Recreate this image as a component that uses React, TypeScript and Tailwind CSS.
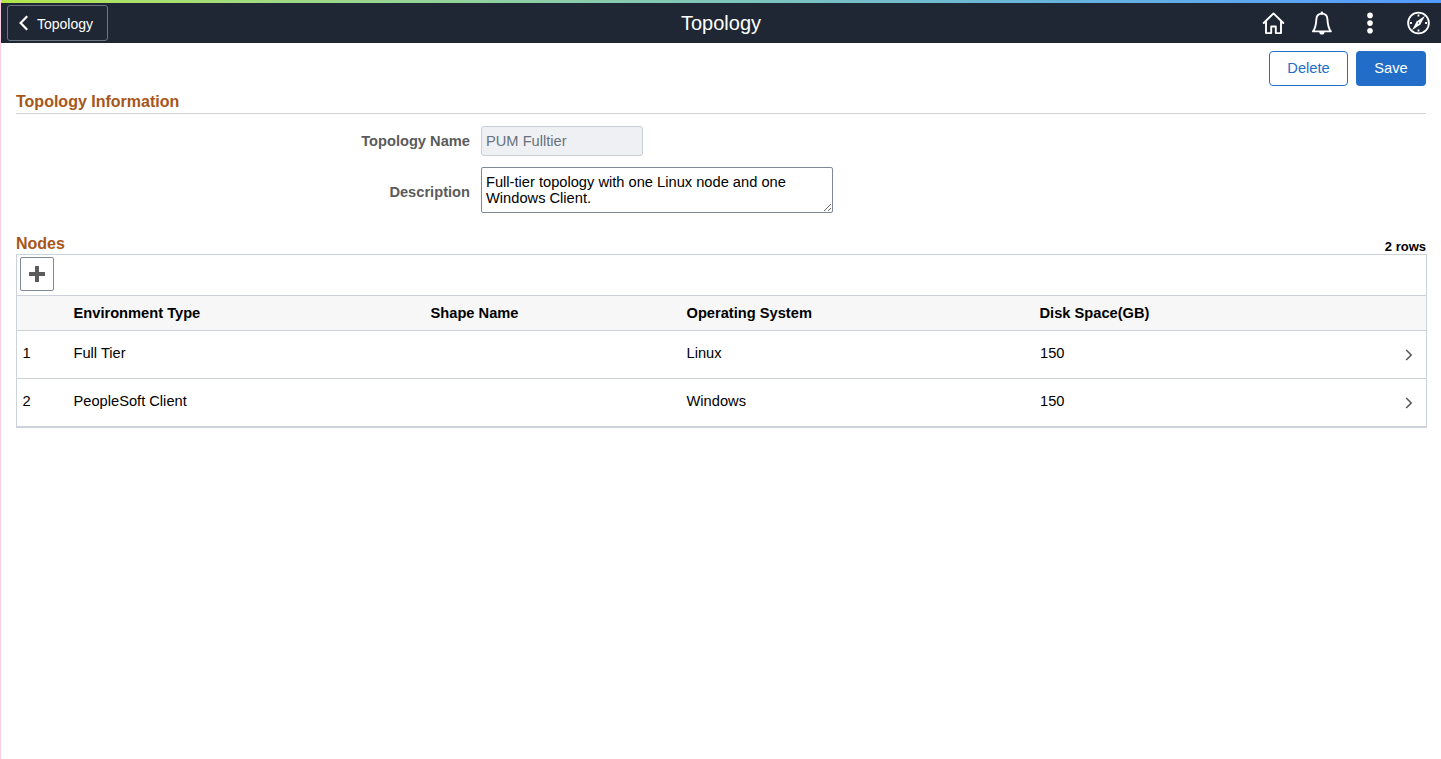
const nodes = [
  { id: 1, env: "Full Tier", shape: "", os: "Linux", disk: 150 },
  { id: 2, env: "PeopleSoft Client", shape: "", os: "Windows", disk: 150 },
];

const columns = "grid grid-cols-[56.5px_357px_256px_353px_1fr]";

function HomeIcon() {
  return (
    <svg width="24" height="24" viewBox="0 0 24 24" fill="none" stroke="#fff" strokeWidth="1.9" strokeLinejoin="round" strokeLinecap="round">
      <path d="M1.7 12 11.5 2.4l9.8 9.6M4 10.6v11.5h5.2v-6.6h4.6v6.6H19V10.6" />
    </svg>
  );
}

function BellIcon() {
  return (
    <svg width="24" height="24" viewBox="0 0 24 24" fill="none" stroke="#fff" strokeWidth="1.9" strokeLinejoin="round">
      <path d="M11.9 2.6c-3.4 0-5.3 2.3-5.5 5.4-.3 5.6-.7 8.8-3.4 12.4h17.8c-2.7-3.6-3.1-6.8-3.4-12.4-.2-3.1-2.1-5.4-5.5-5.4Z" />
      <path d="M9.3 21a2.6 2.6 0 0 0 5.2 0Z" fill="#fff" stroke="none" />
      <path d="M11.9 1.8v.6" strokeWidth="2.6" strokeLinecap="round" />
    </svg>
  );
}

function DotsIcon() {
  return (
    <svg width="24" height="24" viewBox="0 0 24 24" fill="#fff">
      <circle cx="12" cy="4.4" r="2.8" />
      <circle cx="12" cy="12.1" r="2.8" />
      <circle cx="12" cy="19.8" r="2.8" />
    </svg>
  );
}

function CompassIcon() {
  return (
    <svg width="24" height="24" viewBox="0 0 24 24" fill="none" stroke="#fff" strokeWidth="1.8">
      <circle cx="12.5" cy="12" r="10.4" />
      <path d="M12.5 3.4v2M12.5 18.6v2M3.9 12h2M19.1 12h2" />
      <path d="M19 4.8 14.4 13.6 6 19.2l4.6-8.8Z" fill="#fff" stroke="none" />
      <circle cx="12.5" cy="12" r="0.7" fill="#1e2733" stroke="none" />
    </svg>
  );
}

export default function App() {
  return (
    <div className="h-[759px] w-[1441px] overflow-hidden border-l border-[#ffd0e4] bg-white font-['Liberation_Sans',Arial,sans-serif] text-[14.667px] text-black">
      <div className="h-[3px] bg-linear-to-r from-[#b4e64b] to-[#529bff]" />
      <header className="grid h-10 grid-cols-3 items-center bg-[#1e2733] text-white">
        <div className="flex pl-1.5">
          <button className="flex h-9 w-[101px] items-center rounded-[3px] border border-[#6b7682] pl-[11px] text-[14px]">
            <svg className="mr-2" width="10" height="16" viewBox="0 0 10 16" fill="none" stroke="#fff" strokeWidth="2.2">
              <path d="M8.2 1.2 1.6 8l6.6 6.8" />
            </svg>
            <span className="pt-0.5">Topology</span>
          </button>
        </div>
        <h1 className="text-center text-[20px] leading-10">Topology</h1>
        <div className="flex items-center justify-end gap-6 pr-[11px]">
          <HomeIcon />
          <BellIcon />
          <DotsIcon />
          <CompassIcon />
        </div>
      </header>
      <main className="pr-[15px] pl-[15px]">
        <div className="flex justify-end gap-2 pt-2">
          <button className="h-[35px] w-[79px] rounded-[4px] border border-[#226dc8] pb-0.5 text-[#226dc8]">Delete</button>
          <button className="h-[35px] w-[70px] rounded-[4px] bg-[#226dc8] pb-0.5 text-white">Save</button>
        </div>
        <h2 className="flex h-7 items-center border-b border-[#d0d2d3] pt-1 text-[16px] font-bold text-[#a75619]">Topology Information</h2>
        <div className="flex items-center pt-3">
          <label className="w-[454px] text-right font-bold text-[#5b5b5b]">Topology Name</label>
          <input className="ml-[11px] h-[30px] w-[162px] rounded-[3px] border border-[#c9cfd6] bg-[#eff0f4] px-1 text-[#68727c]" value="PUM Fulltier" readOnly />
        </div>
        <div className="flex items-center pt-[11px]">
          <label className="w-[454px] pt-1 text-right font-bold text-[#5b5b5b]">Description</label>
          <textarea
            className="ml-[11px] h-[46px] w-[352px] resize overflow-hidden rounded-[2px] border border-[#808a95] px-1 py-1.5 leading-4"
            defaultValue="Full-tier topology with one Linux node and one Windows Client."
          />
        </div>
        <div className="flex h-[41px] items-end justify-between">
          <h2 className="text-[16px] leading-5 font-bold text-[#a75619]">Nodes</h2>
          <span className="text-[13px] leading-[14px] font-bold">2 rows</span>
        </div>
        <section className="-mr-px border border-b-2 border-[#cdd2d9]">
          <div className="h-10 pt-0.5 pl-[3px]">
            <button className="flex h-[34px] w-[34px] items-center justify-center rounded-[2px] border border-[#808a95]">
              <svg width="16" height="16" viewBox="0 0 16 16" fill="#5b5b5b">
                <path d="M6 .5Q6 0 6.5 0h3q.5 0 .5.5V6h5.5q.5 0 .5.5v3q0 .5-.5.5H10v5.5q0 .5-.5.5h-3q-.5 0-.5-.5V10H.5Q0 10 0 9.5v-3Q0 6 .5 6H6Z" />
              </svg>
            </button>
          </div>
          <div className={`${columns} h-9 items-center border-y border-[#cdd2d9] bg-[#f7f7f7] font-bold`}>
            <span />
            <span>Environment Type</span>
            <span>Shape Name</span>
            <span>Operating System</span>
            <span>Disk Space(GB)</span>
          </div>
          {nodes.map((n) => (
            <div key={n.id} className={`${columns} h-12 items-center border-b border-[#cdd2d9] last:h-[47px] last:border-b-0`}>
              <span className="pb-[3px] pl-[5.5px]">{n.id}</span>
              <span className="pb-[3px]">{n.env}</span>
              <span>{n.shape}</span>
              <span className="pb-[3px]">{n.os}</span>
              <div className="flex items-center justify-between pr-[13px]">
                <span className="pb-[3px] pl-[0.5px]">{n.disk}</span>
                <svg width="8" height="12" viewBox="0 0 8 12" fill="none" stroke="#5b5b5b" strokeWidth="1.6">
                  <path d="m1.2 1 5 5-5 5" />
                </svg>
              </div>
            </div>
          ))}
        </section>
      </main>
    </div>
  );
}
